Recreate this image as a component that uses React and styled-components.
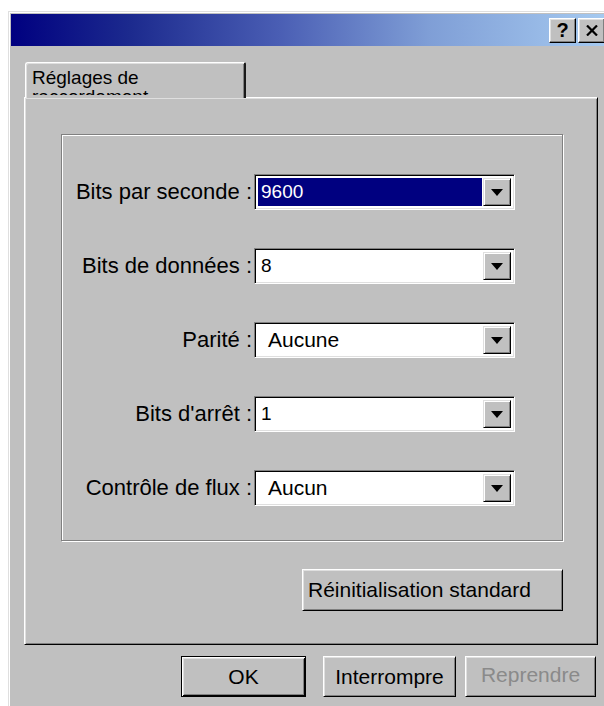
import styled, { createGlobalStyle } from "styled-components";

const GlobalStyle = createGlobalStyle`
  html, body {
    margin: 0;
    padding: 0;
    background: #fff;
    overflow: hidden;
  }
  body {
    font-family: "Liberation Sans", Arial, sans-serif;
    color: #000;
  }
`;

const settings = [
  { label: "Bits par seconde :", value: "9600", selected: true },
  { label: "Bits de données :", value: "8" },
  { label: "Parité :", value: "Aucune", word: true },
  { label: "Bits d'arrêt :", value: "1" },
  { label: "Contrôle de flux :", value: "Aucun", word: true },
];

export default function App() {
  return (
    <Page>
      <GlobalStyle />
      <Window>
        <TitleBar>
          <CaptionButton>?</CaptionButton>
          <CaptionButton>
            <svg width="12" height="11" viewBox="0 0 12 11">
              <path d="M1 0.5 L11 10.5 M11 0.5 L1 10.5" stroke="#000" strokeWidth="2.2" />
            </svg>
          </CaptionButton>
        </TitleBar>

        <Content>
          <TabStrip>
            <Tab>
              <TabLabel>Réglages de raccordement</TabLabel>
            </Tab>
          </TabStrip>

          <Panel>
            <Stack>
              <GroupBox>
                {settings.map((s) => (
                  <Row key={s.label}>
                    <Label>{s.label}</Label>
                    <Combo>
                      <Value $selected={s.selected} $word={s.word}>
                        {s.value}
                      </Value>
                      <ArrowButton>
                        <svg width="12" height="7" viewBox="0 0 12 7">
                          <polygon points="0,0 12,0 6,7" fill="#000" />
                        </svg>
                      </ArrowButton>
                    </Combo>
                  </Row>
                ))}
              </GroupBox>
              <Button $w={261} $h={42} $left>
                Réinitialisation standard
              </Button>
            </Stack>
          </Panel>

          <ButtonRow>
            <Button $w={125} $default>
              OK
            </Button>
            <Button $w={133} style={{ marginLeft: 17 }}>
              Interrompre
            </Button>
            <Button $w={131} $disabled style={{ marginLeft: 9 }}>
              Reprendre
            </Button>
          </ButtonRow>
        </Content>
      </Window>
    </Page>
  );
}

// STYLED COMPONENTS
const Page = styled.div`
  padding: 11px 0 0 8px;
  height: 706px;
  box-sizing: border-box;
`;

const Window = styled.div`
  box-sizing: border-box;
  width: 602px;
  height: 740px;
  padding: 2px;
  background: #c0c0c0;
  border-top: 1px solid #dfdfdf;
  border-left: 1px solid #dfdfdf;
  border-right: 1px solid #000;
  border-bottom: 1px solid #000;
  box-shadow: inset 1px 1px #fff, inset -1px -1px #808080;
`;

const TitleBar = styled.div`
  height: 32px;
  display: flex;
  align-items: center;
  justify-content: flex-end;
  gap: 2px;
  padding-right: 2px;
  background: linear-gradient(to right, #000080 0%, #1c2a8e 20%, #4a5eb4 45%, #7f9ed6 70%, #a6caf0 100%);
`;

const CaptionButton = styled.div`
  box-sizing: border-box;
  width: 27px;
  height: 25px;
  display: flex;
  align-items: center;
  justify-content: center;
  background: #c0c0c0;
  border-top: 1px solid #fff;
  border-left: 1px solid #fff;
  border-right: 1px solid #000;
  border-bottom: 1px solid #000;
  box-shadow: inset -1px -1px #808080, inset 1px 1px #dfdfdf;
  font-size: 20px;
  font-weight: bold;
  line-height: 1;
`;

const Content = styled.div`
  padding: 16px 0 0 13px;
`;

const TabStrip = styled.div`
  display: flex;
  height: 35px;
`;

const Tab = styled.div`
  position: relative;
  z-index: 1;
  box-sizing: border-box;
  width: 221px;
  height: 36px;
  margin-left: 1px;
  padding: 5px 0 0 6px;
  background: #c0c0c0;
  border-top: 1px solid #fff;
  border-left: 1px solid #fff;
  border-right: 2px solid #1a1a1a;
  border-top-left-radius: 3px;
  border-top-right-radius: 2px;
  box-shadow: inset 1px 1px #dfdfdf, inset -1px 0 #808080;
`;

const TabLabel = styled.span`
  display: block;
  height: 27px;
  overflow: hidden;
  font-size: 19px;
  line-height: 19px;
`;

const Panel = styled.div`
  box-sizing: border-box;
  width: 574px;
  height: 548px;
  padding: 36px 0 0 36px;
  border-top: 1px solid #fff;
  border-left: 1px solid #fff;
  border-right: 1px solid #000;
  border-bottom: 1px solid #000;
  box-shadow: inset 1px 1px #dfdfdf, inset -1px -1px #808080;
`;

const Stack = styled.div`
  width: 502px;
  display: flex;
  flex-direction: column;
  align-items: flex-end;
  gap: 28px;
`;

const GroupBox = styled.div`
  box-sizing: border-box;
  width: 502px;
  height: 407px;
  padding-top: 39px;
  border: 1px solid #808080;
  box-shadow: inset 1px 1px #fff, 1px 1px #fff;
  display: flex;
  flex-direction: column;
  gap: 38px;
`;

const Row = styled.div`
  display: grid;
  grid-template-columns: 190px 261px;
  column-gap: 2px;
  align-items: center;
`;

const Label = styled.span`
  justify-self: end;
  font-size: 22px;
  white-space: nowrap;
`;

const Combo = styled.div`
  box-sizing: border-box;
  height: 36px;
  display: flex;
  padding: 3px;
  background: #fff;
  border-top: 1px solid #808080;
  border-left: 1px solid #808080;
  border-right: 1px solid #fff;
  border-bottom: 1px solid #fff;
  box-shadow: inset 1px 1px #000, inset -1px -1px #dfdfdf;
`;

const Value = styled.span`
  flex: 1;
  display: flex;
  align-items: center;
  margin: 0 1px 0 0;
  padding-left: ${(p) => (p.$word ? "10px" : "3px")};
  font-size: ${(p) => (p.$word ? "21px" : "19px")};
  background: ${(p) => (p.$selected ? "#000080" : "transparent")};
  color: ${(p) => (p.$selected ? "#fff" : "#000")};
`;

const ArrowButton = styled.div`
  box-sizing: border-box;
  width: 28px;
  display: flex;
  align-items: center;
  justify-content: center;
  background: #c0c0c0;
  border-top: 1px solid #dfdfdf;
  border-left: 1px solid #dfdfdf;
  border-right: 1px solid #000;
  border-bottom: 1px solid #000;
  box-shadow: inset 1px 1px #fff, inset -1px -1px #808080;
`;

const ButtonRow = styled.div`
  width: 574px;
  box-sizing: border-box;
  margin-top: 11px;
  padding-right: 2px;
  display: flex;
  justify-content: flex-end;
`;

const Button = styled.div`
  box-sizing: border-box;
  width: ${(p) => p.$w}px;
  height: ${(p) => p.$h || 41}px;
  display: flex;
  align-items: center;
  justify-content: ${(p) => (p.$left ? "flex-start" : "center")};
  padding-left: ${(p) => (p.$left ? "5px" : "0")};
  padding-bottom: ${(p) => (p.$disabled ? "4px" : "0")};
  background: #c0c0c0;
  font-size: 21px;
  color: ${(p) => (p.$disabled ? "#8a8a8a" : "#000")};
  border-top: 1px solid ${(p) => (p.$default ? "#000" : "#fff")};
  border-left: 1px solid ${(p) => (p.$default ? "#000" : "#fff")};
  border-right: 1px solid #000;
  border-bottom: 1px solid #000;
  box-shadow: ${(p) =>
    p.$default
      ? "inset 1px 1px #fff, inset -1px -1px #000, inset 2px 2px #dfdfdf, inset -2px -2px #808080"
      : "inset 1px 1px #dfdfdf, inset -1px -1px #808080"};
`;
